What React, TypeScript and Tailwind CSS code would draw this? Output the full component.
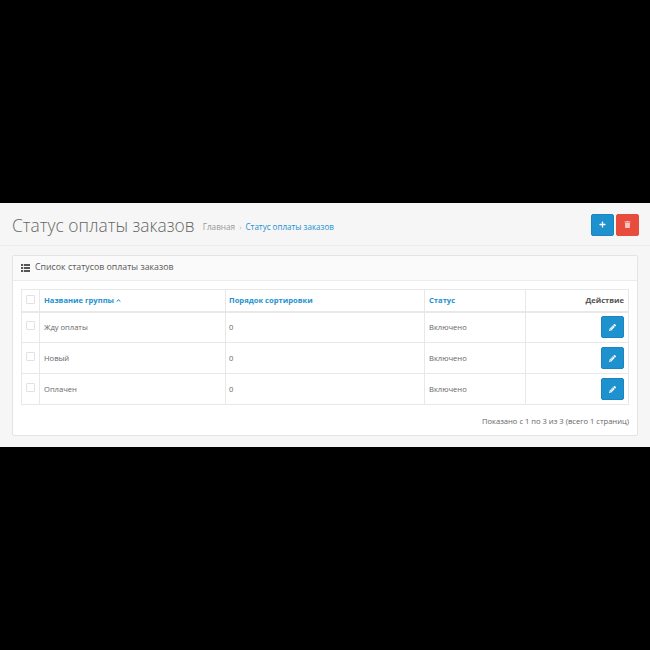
import { FaPlus, FaTrash, FaPencilAlt, FaChevronUp } from "react-icons/fa";

const rows = ["Жду оплаты", "Новый", "Оплачен"];

function Box() {
  return <span className="block w-[7px] h-[7px] border border-[#e2e2e2] bg-white box-content rounded-[1px]" />;
}

export default function App() {
  return (
    <div className="w-[650px] h-[650px] bg-black flex flex-col justify-center font-['Open_Sans',sans-serif]">
      <div className="h-[244px] bg-[#f6f6f6] flex flex-col">
        <div className="h-[43px] shrink-0 border-b border-[#ededed] flex items-center pl-[12px] pr-[11px]">
          <h1 className="text-[17.4px] leading-[24px] font-light text-[#666] mr-[8px] pt-[1px]">Статус оплаты заказов</h1>
          <span className="text-[8.2px] text-[#999] pt-[6px]">Главная</span>
          <span className="text-[8px] text-[#bbb] mx-[4px] pt-[6px]">›</span>
          <span className="text-[8.05px] text-[#1e91cf] pt-[6px]">Статус оплаты заказов</span>
          <div className="ml-auto flex gap-[2px] pt-[1px]">
            <button className="w-[23px] h-[22px] rounded-[2px] bg-[#1e91cf] border border-[#1a85bf] flex items-center justify-center">
              <FaPlus size={7} className="text-white" />
            </button>
            <button className="w-[23px] h-[22px] rounded-[2px] bg-[#e74c3c] border border-[#e3503e] flex items-center justify-center">
              <FaTrash size={7} className="text-[#f8c4be]" />
            </button>
          </div>
        </div>
        <div className="mt-[9px] mx-[12px] h-[181px] bg-white border border-[#e4e4e4] rounded-[2px] flex flex-col">
          <div className="h-[25px] shrink-0 bg-[#fafafa] border-b border-[#ececec] flex items-center pl-[8px] text-[8.8px] text-[#595959]">
            <svg width="9" height="8" viewBox="0 0 9 8" className="mr-[5px] mb-[1px]" fill="#555">
              <rect x="0" y="0" width="2" height="2" />
              <rect x="2.8" y="0" width="6.2" height="2" />
              <rect x="0" y="3" width="2" height="2" />
              <rect x="2.8" y="3" width="6.2" height="2" />
              <rect x="0" y="6" width="2" height="2" />
              <rect x="2.8" y="6" width="6.2" height="2" />
            </svg>
            Список статусов оплаты заказов
          </div>
          <div className="px-[8px] pt-[8px] flex-1 flex flex-col">
            <table className="w-[607px] table-fixed border-collapse text-[7.6px] text-[#666]">
              <colgroup>
                <col className="w-[18px]" />
                <col className="w-[186px]" />
                <col className="w-[199px]" />
                <col className="w-[101px]" />
                <col className="w-[103px]" />
              </colgroup>
              <thead>
                <tr className="h-[22px] border-b-2 border-[#e8e8e8] font-bold">
                  <th className="border border-[#e8e8e8] border-b-2 p-0">
                    <div className="flex justify-center pb-[2px]"><Box /></div>
                  </th>
                  <th className="border border-[#e8e8e8] border-b-2 px-[4px] text-left text-[#1e91cf]">
                    <span className="inline-flex items-center gap-[2px]">Название группы <FaChevronUp size={5} /></span>
                  </th>
                  <th className="border border-[#e8e8e8] border-b-2 pl-[3px] pr-[4px] text-left text-[#1e91cf]">Порядок сортировки</th>
                  <th className="border border-[#e8e8e8] border-b-2 px-[4px] text-left text-[#1e91cf]">Статус</th>
                  <th className="border border-[#e8e8e8] border-b-2 px-[4px] text-right text-[#555]">Действие</th>
                </tr>
              </thead>
              <tbody>
                {rows.map((name) => (
                  <tr key={name} className="h-[31px]">
                    <td className="border border-[#e8e8e8] p-0">
                      <div className="flex justify-center pb-[3px]"><Box /></div>
                    </td>
                    <td className="border border-[#e8e8e8] px-[4px] pt-[1px]">{name}</td>
                    <td className="border border-[#e8e8e8] pl-[3px] pr-[4px] pt-[1px]">0</td>
                    <td className="border border-[#e8e8e8] px-[4px] pt-[1px]">Включено</td>
                    <td className="border border-[#e8e8e8] px-[4px]">
                      <div className="flex justify-end">
                        <button className="w-[23px] h-[22px] rounded-[2px] bg-[#1e91cf] border border-[#1a85bf] flex items-center justify-center">
                          <FaPencilAlt size={7} className="text-white" />
                        </button>
                      </div>
                    </td>
                  </tr>
                ))}
              </tbody>
            </table>
            <div className="text-right text-[7.6px] text-[#666] mt-[11px]">Показано с 1 по 3 из 3 (всего 1 страниц)</div>
          </div>
        </div>
      </div>
    </div>
  );
}
